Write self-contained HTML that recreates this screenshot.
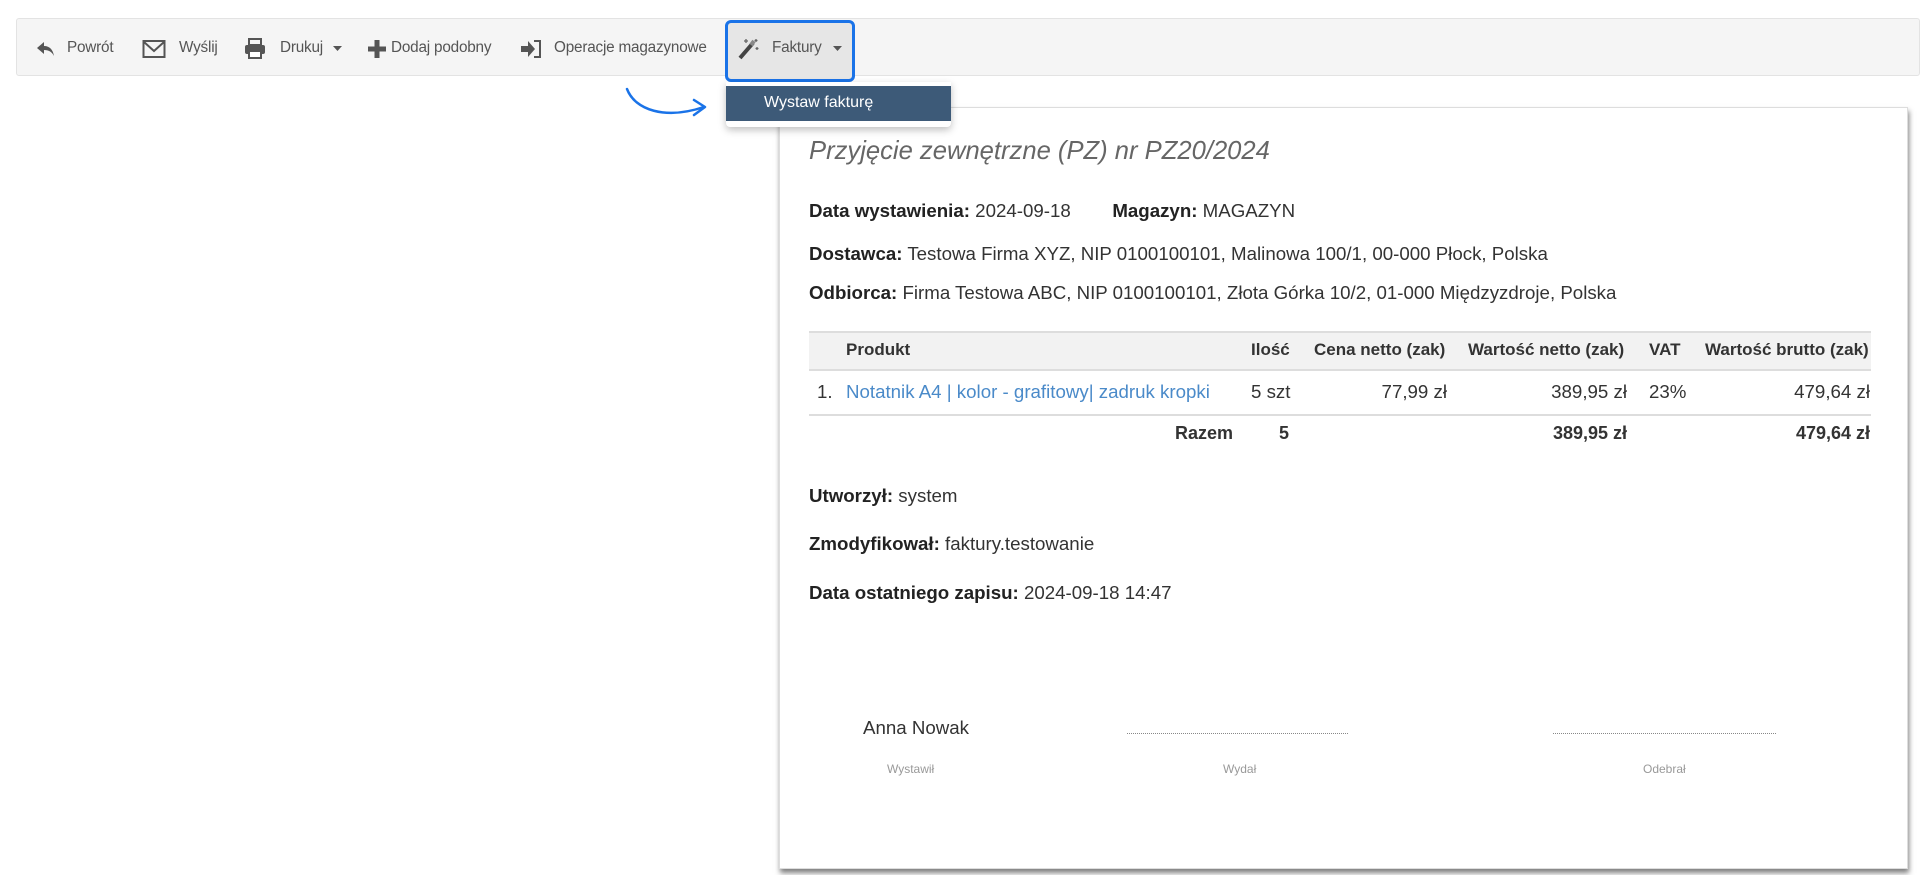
<!DOCTYPE html>
<html><head><meta charset="utf-8"><style>
*{box-sizing:border-box}
body{margin:0;width:1920px;height:875px;background:#fff;font-family:"Liberation Sans",sans-serif;position:relative;overflow:hidden;color:#333}
.tb{position:absolute;left:16px;top:18px;width:1904px;height:58px;background:#f5f5f5;border:1px solid #e3e3e3;border-radius:3px}
.it{position:absolute;top:39px;font-size:15.3px;color:#555;letter-spacing:-0.2px}
.ic{position:absolute}
.fk{position:absolute;left:725px;top:20px;width:130px;height:62px;border:3px solid #1a73e8;border-radius:6px;background:#e6e6e6}
.dd{position:absolute;left:726px;top:82px;width:225px;height:45px;background:#fff;box-shadow:0 3px 8px rgba(0,0,0,.25);border-radius:0 0 4px 4px;z-index:5}
.dd div{position:absolute;left:0;top:4px;width:225px;height:35px;background:#3d5a78;color:#fff;font-size:16px;padding:8px 0 0 38px}
.pp{position:absolute;left:779px;top:107px;width:1129px;height:762px;background:#fff;border:1px solid #ddd;box-shadow:1px 4px 5px rgba(0,0,0,.5)}
.t{position:absolute;font-size:18.7px;color:#333;white-space:nowrap}
.t b{color:#222}
.h{position:absolute;font-size:17px;font-weight:bold;color:#333;white-space:nowrap}
.r{text-align:right}
.s{position:absolute;font-size:12px;color:#999}
.dot{position:absolute;border-top:1px dotted #888;height:0}
</style></head><body>
<div class="tb"></div>
<div class="fk"></div>
<svg class="ic" style="left:36px;top:40px" width="20" height="18" viewBox="0 0 20 18"><path d="M8 2 L1 8 L8 14 V10 C13 10 16 12 18 16 C17 10 14 6 8 6 Z" fill="#555"/></svg>
<span class="it" style="left:67px">Powrót</span>
<svg class="ic" style="left:142px;top:39px" width="24" height="20" viewBox="0 0 24 20"><rect x="1.5" y="2" width="21" height="16" fill="none" stroke="#555" stroke-width="2"/><path d="M2 3 L12 12 L22 3" fill="none" stroke="#555" stroke-width="2"/></svg>
<span class="it" style="left:179px">Wyślij</span>
<svg class="ic" style="left:244px;top:38px" width="22" height="21" viewBox="0 0 22 21"><rect x="5" y="1" width="12" height="6" fill="none" stroke="#555" stroke-width="2"/><rect x="1" y="7" width="20" height="9" rx="2" fill="#555"/><rect x="5" y="13" width="12" height="7" fill="#fff" stroke="#555" stroke-width="2"/></svg>
<span class="it" style="left:280px">Drukuj</span>
<svg class="ic" style="left:333px;top:46px" width="9" height="6"><path d="M0 0H9L4.5 5Z" fill="#555"/></svg>
<svg class="ic" style="left:368px;top:40px" width="18" height="18" viewBox="0 0 18 18"><path d="M6.5 0H11.5V6.5H18V11.5H11.5V18H6.5V11.5H0V6.5H6.5Z" fill="#555"/></svg>
<span class="it" style="left:391px">Dodaj podobny</span>
<svg class="ic" style="left:520px;top:39px" width="22" height="20" viewBox="0 0 22 20"><path d="M1 7H8V2L15 10L8 18V13H1Z" fill="#555"/><path d="M14 2H20V18H14" fill="none" stroke="#555" stroke-width="2"/></svg>
<span class="it" style="left:554px">Operacje magazynowe</span>
<svg class="ic" style="left:736px;top:36px" width="24" height="24" viewBox="0 0 24 24"><path d="M4 22 L17 7" stroke="#444" stroke-width="4"/><path d="M15 9 L18 5" stroke="#888" stroke-width="4"/><path d="M10 3v4M8 5h4M20 3v3M18.5 4.5h3M21 11v3M19.5 12.5h3" stroke="#666" stroke-width="1.3"/></svg>
<span class="it" style="left:772px">Faktury</span>
<svg class="ic" style="left:833px;top:46px" width="9" height="6"><path d="M0 0H9L4.5 5Z" fill="#555"/></svg>
<svg class="ic" style="left:620px;top:85px" width="95" height="40" viewBox="0 0 95 40"><path d="M7 4 C15 25 45 35 84 22" fill="none" stroke="#1a73e8" stroke-width="2.5" stroke-linecap="round"/><path d="M74 15 L85 22 L74 30" fill="none" stroke="#1a73e8" stroke-width="2.5" stroke-linecap="round" stroke-linejoin="round"/></svg>
<div class="pp"></div>
<div class="dd"><div>Wystaw fakturę</div></div>
<div class="t" style="left:809px;top:137px;font-size:25.6px;font-style:italic;color:#666">Przyjęcie zewnętrzne (PZ) nr PZ20/2024</div>
<div class="t" style="left:809px;top:200px"><b>Data wystawienia:</b> 2024-09-18 &nbsp;&nbsp;&nbsp;&nbsp;&nbsp;&nbsp;&nbsp;<b>Magazyn:</b> MAGAZYN</div>
<div class="t" style="left:809px;top:243px"><b>Dostawca:</b> Testowa Firma XYZ, NIP 0100100101, Malinowa 100/1, 00-000 Płock, Polska</div>
<div class="t" style="left:809px;top:282px"><b>Odbiorca:</b> Firma Testowa ABC, NIP 0100100101, Złota Górka 10/2, 01-000 Międzyzdroje, Polska</div>
<div style="position:absolute;left:809px;top:331px;width:1062px;height:40px;background:#f2f2f2;border-top:2px solid #ddd;border-bottom:2px solid #ddd"></div>
<div style="position:absolute;left:809px;top:414px;width:1062px;border-top:2px solid #ddd"></div>
<div class="h" style="left:846px;top:340px">Produkt</div>
<div class="h" style="left:1251px;top:340px">Ilość</div>
<div class="h" style="left:1314px;top:340px">Cena netto (zak)</div>
<div class="h" style="left:1468px;top:340px">Wartość netto (zak)</div>
<div class="h" style="left:1649px;top:340px">VAT</div>
<div class="h" style="left:1705px;top:340px">Wartość brutto (zak)</div>
<div class="t" style="left:817px;top:381px">1.</div>
<div class="t" style="left:846px;top:381px;color:#4a8ac9">Notatnik A4 | kolor - grafitowy| zadruk kropki</div>
<div class="t" style="left:1251px;top:381px">5 szt</div>
<div class="t r" style="right:473px;top:381px">77,99 zł</div>
<div class="t r" style="right:293px;top:381px">389,95 zł</div>
<div class="t" style="left:1649px;top:381px">23%</div>
<div class="t r" style="right:50px;top:381px">479,64 zł</div>
<div class="h" style="right:687px;top:423px;font-size:18px">Razem</div>
<div class="h" style="left:1279px;top:423px;font-size:18px">5</div>
<div class="h" style="right:293px;top:423px;font-size:18px">389,95 zł</div>
<div class="h" style="right:50px;top:423px;font-size:18px">479,64 zł</div>
<div class="t" style="left:809px;top:485px"><b>Utworzył:</b> system</div>
<div class="t" style="left:809px;top:533px"><b>Zmodyfikował:</b> faktury.testowanie</div>
<div class="t" style="left:809px;top:582px"><b>Data ostatniego zapisu:</b> 2024-09-18 14:47</div>
<div class="t" style="left:863px;top:717px">Anna Nowak</div>
<div class="dot" style="left:1127px;top:733px;width:221px"></div>
<div class="dot" style="left:1553px;top:733px;width:223px"></div>
<div class="s" style="left:887px;top:762px">Wystawił</div>
<div class="s" style="left:1223px;top:762px">Wydał</div>
<div class="s" style="left:1643px;top:762px">Odebrał</div>
</body></html>
